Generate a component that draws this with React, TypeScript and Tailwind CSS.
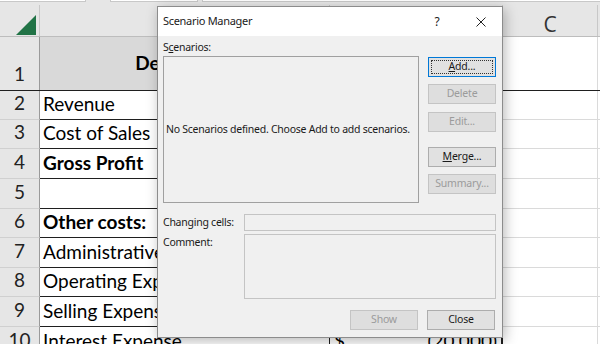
import React from "react";

const DARK = "border-[#1f1f1f]";

function Btn({
  label,
  u,
  disabled,
  def,
  className = "",
}: {
  label: string;
  u?: number;
  disabled?: boolean;
  def?: boolean;
  className?: string;
}) {
  const text =
    u === undefined ? (
      label
    ) : (
      <>
        {label.slice(0, u)}
        <span className="underline underline-offset-1">{label[u]}</span>
        {label.slice(u + 1)}
      </>
    );
  return (
    <div
      className={`relative h-[20px] w-[68px] flex items-center justify-center text-[10.5px] tracking-[-0.2px] border ${
        def
          ? "border-[#0078d7] bg-[#e1e1e1] text-[#1a1a1a]"
          : disabled
          ? "border-[#c4c4c4] bg-[#dedede] text-[#9b9b9b]"
          : "border-[#adadad] bg-[#e1e1e1] text-[#1a1a1a]"
      } ${className}`}
    >
      {def && (
        <div className="absolute inset-[2px] border border-dotted border-[#333]" />
      )}
      <span className="relative">{text}</span>
    </div>
  );
}

type Row = {
  h: string;
  n: string;
  a?: string;
  bold?: boolean;
  b?: string;
  bRight?: string;
};

const rows: Row[] = [
  { h: "h-[29px]", n: "2", a: "Revenue" },
  { h: "h-[29px]", n: "3", a: "Cost of Sales" },
  { h: "h-[30px]", n: "4", a: "Gross Profit", bold: true },
  { h: "h-[30px]", n: "5", a: "" },
  { h: "h-[29px]", n: "6", a: "Other costs:", bold: true },
  { h: "h-[30px]", n: "7", a: "Administrative Expenses" },
  { h: "h-[29px]", n: "8", a: "Operating Expenses" },
  { h: "h-[30px]", n: "9", a: "Selling Expenses" },
  { h: "h-[30px]", n: "10", a: "Interest Expense", b: "$", bRight: "(20,000)" },
];

export default function App() {
  return (
    <div
      className="relative w-[600px] h-[344px] overflow-hidden bg-white"
      style={{ fontFamily: "Lato, 'Noto Sans', sans-serif" }}
    >
      {/* top strip */}
      <div className="h-[5px] bg-[#e6e6e6] flex">
        <div className="w-[86px] h-[2px] bg-white border-r border-b border-[#c8c8c8]" />
        <div className="w-[24px]" />
        <div className="w-[88px] h-[2px] bg-white border-l border-r border-b border-[#c8c8c8]" />
        <div className="w-[4px]" />
        <div className="flex-1 h-[2px] bg-white border-l border-b border-[#c8c8c8]" />
      </div>

      {/* column header row */}
      <div className="flex h-[32px] bg-[#e6e6e6] border-b border-[#bdbdbd]">
        <div className="w-[40px] shrink-0 relative border-r border-[#c8c8c8]">
          <svg
            className="absolute left-[16px] top-[10px]"
            width="20"
            height="20"
            viewBox="0 0 20 20"
          >
            <polygon points="0,20 20,20 20,0" fill="#217346" />
          </svg>
        </div>
        <div className="w-[290px] shrink-0 border-r border-[#c8c8c8]" />
        <div className="w-[173px] shrink-0 border-r border-[#c8c8c8]" />
        <div
          className="w-[95px] shrink-0 border-r border-[#c8c8c8] flex items-end justify-center text-[21px] leading-none text-[#333] pb-[1px]"
          style={{ fontFamily: "'Open Sans', sans-serif" }}
        >
          C
        </div>
        <div className="flex-1" />
      </div>

      {/* row 1 */}
      <div className={`flex h-[54px] border-b ${DARK}`}>
        <div className="w-[40px] shrink-0 bg-[#e6e6e6] border-r border-[#9a9a9a] flex items-end justify-center pb-[2px] text-[19px] text-[#222]">
          1
        </div>
        <div className="w-[290px] shrink-0 bg-[#d9d9d9] border-r border-[#d9d9d9] flex items-center justify-center text-[19px] font-bold text-black">
          Description
        </div>
        <div className={`w-[173px] shrink-0 bg-[#d9d9d9] border-r-2 ${DARK}`} />
        <div className="w-[95px] shrink-0 border-r border-[#dadada]" />
        <div className="flex-1" />
      </div>

      {rows.map((r) => (
        <div key={r.n} className={`flex ${r.h}`}>
          <div className="w-[40px] shrink-0 bg-[#e6e6e6] border-r border-b border-r-[#9a9a9a] border-b-[#d0d0d0] flex items-end justify-center pb-[2px] text-[19px] text-[#222]">
            {r.n}
          </div>
          <div
            className={`w-[290px] shrink-0 border-r border-b ${DARK} flex items-end pl-[3px] pb-[1px] text-[19px] text-black whitespace-nowrap overflow-hidden ${
              r.bold ? "font-bold" : ""
            }`}
          >
            {r.a}
          </div>
          <div
            className={`w-[173px] shrink-0 border-r-2 border-b ${DARK} flex items-end justify-between px-[4px] pb-[1px] text-[19px] text-black`}
          >
            <span>{r.b}</span>
            <span>{r.bRight}</span>
          </div>
          <div className="w-[95px] shrink-0 border-r border-b border-[#dadada]" />
          <div className="flex-1 border-b border-[#dadada]" />
        </div>
      ))}

      {/* Dialog */}
      <div
        className="absolute left-[157px] top-[6px] w-[346px] h-[332px] bg-[#f0f0f0] border border-[#8c8c8c] shadow-[2px_3px_12px_rgba(0,0,0,0.28)] flex flex-col text-[#1a1a1a] text-[10.5px] tracking-[-0.25px]"
        style={{ fontFamily: "'Noto Sans', sans-serif" }}
      >
        {/* title bar */}
        <div className="h-[29px] bg-white flex items-center shrink-0">
          <div className="pl-[5px] text-[11px] tracking-[-0.3px] text-[#1a1a1a] flex-1">
            Scenario Manager
          </div>
          <div className="w-[20px] text-center text-[12px] mr-[29px]">?</div>
          <svg width="10" height="10" viewBox="0 0 10 10" className="mr-[16px]">
            <path d="M0.5 0.5 L9.5 9.5 M9.5 0.5 L0.5 9.5" stroke="#222" strokeWidth="1" />
          </svg>
        </div>

        {/* body */}
        <div className="flex-1 flex flex-col pl-[5px] pr-[6px]">
          <div className="flex">
            <div className="flex flex-col">
              <div className="h-[20px] pt-[4px] leading-[14px]">
                S<span className="underline underline-offset-1">c</span>enarios:
              </div>
              <div className="w-[256px] h-[147px] border border-[#a0a0a0] bg-[#f0f0f0] flex items-center pl-[2px] whitespace-nowrap">
                No Scenarios defined. Choose Add to add scenarios.
              </div>
            </div>
            <div className="ml-auto mt-[21px] flex flex-col">
              <Btn label="Add..." u={0} def />
              <Btn label="Delete" disabled className="mt-[7px]" />
              <Btn label="Edit..." disabled className="mt-[8px]" />
              <Btn label="Merge..." u={0} className="mt-[15px]" />
              <Btn label="Summary..." disabled className="mt-[7px]" />
            </div>
          </div>

          <div className="flex mt-[11px] h-[17px]">
            <div className="w-[81px] flex items-center">Changing cells:</div>
            <div className="flex-1 border border-[#c4c4c4] bg-[#f0f0f0]" />
          </div>
          <div className="flex mt-[3px] h-[65px]">
            <div className="w-[81px] pt-[1px]">Comment:</div>
            <div className="flex-1 border border-[#c4c4c4] bg-[#f0f0f0]" />
          </div>

          <div className="flex justify-end mt-[11px] gap-[9px] pr-[1px]">
            <Btn label="Show" disabled />
            <Btn label="Close" />
          </div>
        </div>
      </div>
    </div>
  );
}
